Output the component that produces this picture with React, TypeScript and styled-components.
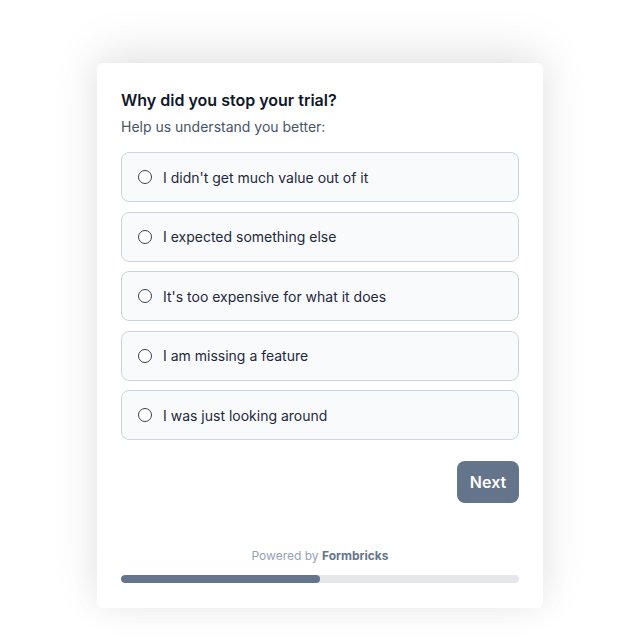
import React, { useState } from "react";
import styled, { createGlobalStyle } from "styled-components";

const Global = createGlobalStyle`
  html, body { margin: 0; padding: 0; background: #ffffff; }
  body { font-family: Inter, "Noto Sans", "Liberation Sans", sans-serif; -webkit-font-smoothing: antialiased; }
  * { box-sizing: border-box; }
`;

const Page = styled.div`
  width: 626px;
  height: 644px;
  padding: 63px 0 0 97px;
  overflow: hidden;
`;

const Card = styled.div`
  width: 446px;
  background: #ffffff;
  border-radius: 6px;
  padding: 24px 24px 25px 24px;
  box-shadow: 0 -12px 50px rgba(0, 0, 0, 0.09), 0 0 30px rgba(0, 0, 0, 0.05);
  display: flex;
  flex-direction: column;
`;

const Title = styled.h1`
  margin: 0;
  font-size: 16px;
  line-height: 26px;
  font-weight: 600;
  color: #0f172a;
`;

const Subtitle = styled.p`
  margin: 4px 0 0 0;
  font-size: 14px;
  line-height: 20px;
  color: #475569;
`;

const Options = styled.div`
  margin-top: 15px;
  display: flex;
  flex-direction: column;
  gap: 9.5px;
`;

const Option = styled.label<{ $selected: boolean }>`
  display: flex;
  align-items: center;
  gap: 11px;
  height: 50px;
  padding: 0 16px;
  border: 1px solid #cbd5e1;
  border-radius: 8px;
  background: ${(p) => (p.$selected ? "#eef2f7" : "#f8fafc")};
  font-size: 14px;
  color: #1e293b;
  cursor: pointer;
`;

const Radio = styled.span<{ $selected: boolean }>`
  width: 14px;
  height: 14px;
  border-radius: 50%;
  border: 1px solid #334155;
  background: #ffffff;
  flex: none;
  display: flex;
  align-items: center;
  justify-content: center;
  &::after {
    content: "";
    width: 6px;
    height: 6px;
    border-radius: 50%;
    background: ${(p) => (p.$selected ? "#334155" : "transparent")};
  }
`;

const Actions = styled.div`
  margin-top: 21px;
  display: flex;
  justify-content: flex-end;
`;

const NextButton = styled.button`
  height: 42px;
  width: 62px;
  border: none;
  border-radius: 8px;
  background: #64748b;
  color: #ffffff;
  font-family: inherit;
  font-size: 16px;
  font-weight: 600;
  cursor: pointer;
`;

const Powered = styled.div`
  margin-top: 45px;
  text-align: center;
  font-size: 12px;
  line-height: 16px;
  color: #94a3b8;
  & b { color: #64748b; font-weight: 700; }
`;

const Track = styled.div`
  margin-top: 11px;
  height: 8px;
  border-radius: 4px;
  background: #e5e7eb;
  overflow: hidden;
`;

const Fill = styled.div`
  height: 100%;
  border-radius: 4px;
  background: #64748b;
`;

const choices = [
  "I didn't get much value out of it",
  "I expected something else",
  "It's too expensive for what it does",
  "I am missing a feature",
  "I was just looking around",
];

export default function App() {
  const [sel, setSel] = useState<number | null>(null);
  return (
    <Page>
      <Global />
      <Card>
        <Title>Why did you stop your trial?</Title>
        <Subtitle>Help us understand you better:</Subtitle>
        <Options>
          {choices.map((c, i) => (
            <Option key={c} $selected={sel === i} onClick={() => setSel(i)}>
              <Radio $selected={sel === i} />
              {c}
            </Option>
          ))}
        </Options>
        <Actions>
          <NextButton>Next</NextButton>
        </Actions>
        <Powered>
          Powered by <b>Formbricks</b>
        </Powered>
        <Track>
          <Fill style={{ width: "50%" }} />
        </Track>
      </Card>
    </Page>
  );
}
